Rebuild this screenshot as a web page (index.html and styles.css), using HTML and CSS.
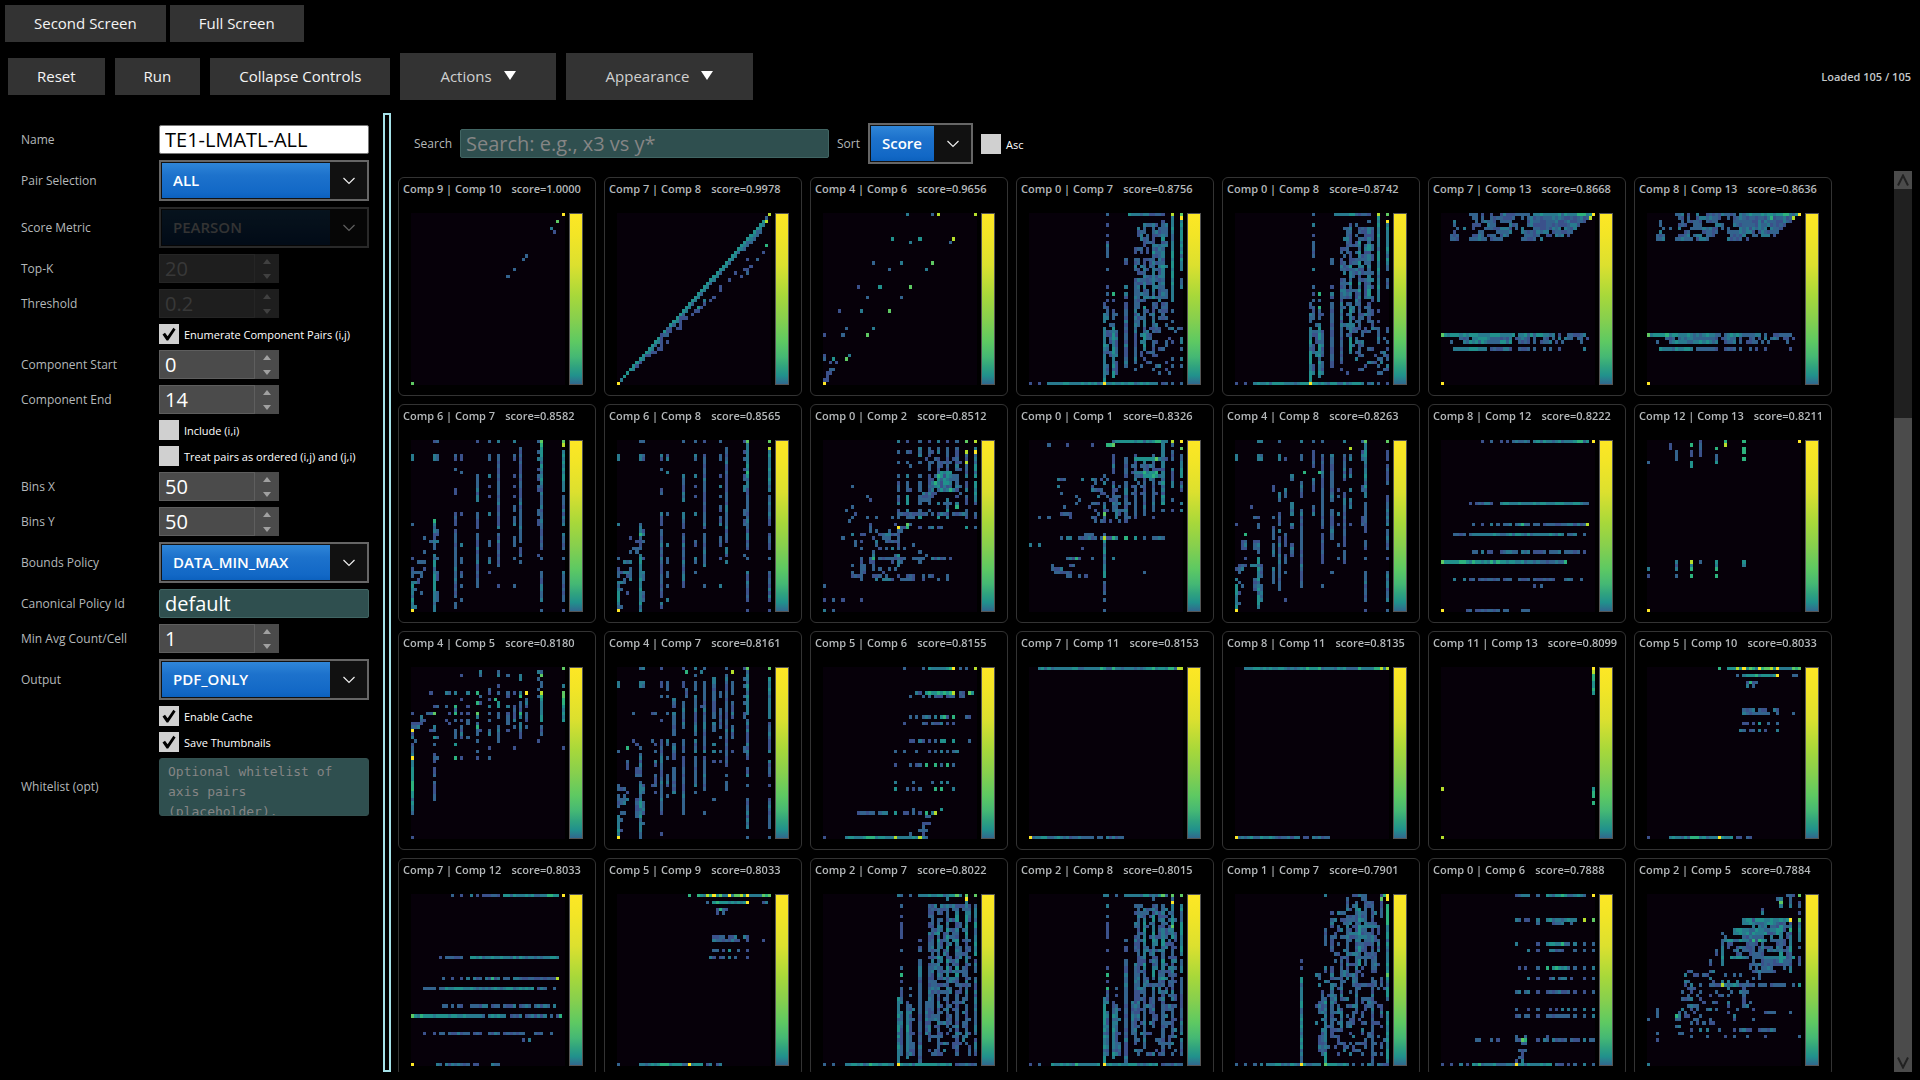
FILE: index.html
```html
<!DOCTYPE html>
<html lang="en">
<head>
<meta charset="utf-8">
<title>Pairwise Density Grid</title>
<link rel="stylesheet" href="styles.css">
</head>
<body>
<svg class="defs" aria-hidden="true">
  <symbol id="chevron" viewBox="0 0 12 8"><path d="M0.5 1 6 6.5 11.5 1" fill="none" stroke="currentColor" stroke-width="1.2"/></symbol>
  <symbol id="tick" viewBox="0 0 20 20"><path d="M3.5 10.5 6 8.8 8.6 12.2 14.4 3.8 16.6 5.4 9.2 16.6 7.6 16.6Z" fill="#000"/></symbol>
  <symbol id="up" viewBox="0 0 8 5"><path d="M4 0 8 5H0Z" fill="currentColor"/></symbol>
  <symbol id="down" viewBox="0 0 8 5"><path d="M0 0H8L4 5Z" fill="currentColor"/></symbol>
  <symbol id="menu" viewBox="0 0 12 9"><path d="M0 0H12L6 9Z" fill="#fff"/></symbol>
</svg>

<nav class="topbar">
  <button class="btn" type="button">Second Screen</button>
  <button class="btn" type="button">Full Screen</button>
</nav>

<header class="toolbar">
  <div class="toolbar-left">
    <button class="btn" type="button">Reset</button>
    <button class="btn" type="button">Run</button>
    <button class="btn" type="button">Collapse Controls</button>
  </div>
  <div class="toolbar-menus">
    <button class="btn menu-btn" type="button">Actions <svg class="menu-arrow"><use href="#menu"/></svg></button>
    <button class="btn menu-btn" type="button">Appearance <svg class="menu-arrow"><use href="#menu"/></svg></button>
  </div>
  <span class="status">Loaded 105 / 105</span>
</header>

<main class="workspace">
  <form class="controls">
    <label for="name">Name</label>
    <input class="text text-focus" id="name" type="text" value="TE1-LMATL-ALL">

    <label for="pair">Pair Selection</label>
    <div class="combo"><select id="pair"><option>ALL</option></select><svg class="chev"><use href="#chevron"/></svg></div>

    <label for="metric">Score Metric</label>
    <div class="combo is-disabled"><select id="metric" disabled><option>PEARSON</option></select><svg class="chev"><use href="#chevron"/></svg></div>

    <label for="topk">Top-K</label>
    <div class="spin is-disabled"><input id="topk" type="text" value="20" disabled><span class="steps"><svg><use href="#up"/></svg><svg><use href="#down"/></svg></span></div>

    <label for="threshold">Threshold</label>
    <div class="spin is-disabled"><input id="threshold" type="text" value="0.2" disabled><span class="steps"><svg><use href="#up"/></svg><svg><use href="#down"/></svg></span></div>

    <div class="check"><span class="box"><input id="enum" type="checkbox" checked><svg><use href="#tick"/></svg></span><label for="enum">Enumerate Component Pairs (i,j)</label></div>

    <label for="cstart">Component Start</label>
    <div class="spin"><input id="cstart" type="text" value="0"><span class="steps"><svg><use href="#up"/></svg><svg><use href="#down"/></svg></span></div>

    <label for="cend">Component End</label>
    <div class="spin"><input id="cend" type="text" value="14"><span class="steps"><svg><use href="#up"/></svg><svg><use href="#down"/></svg></span></div>

    <div class="check"><span class="box"><input id="incl" type="checkbox"><svg><use href="#tick"/></svg></span><label for="incl">Include (i,i)</label></div>
    <div class="check"><span class="box"><input id="ordered" type="checkbox"><svg><use href="#tick"/></svg></span><label for="ordered">Treat pairs as ordered (i,j) and (j,i)</label></div>

    <label for="binsx">Bins X</label>
    <div class="spin"><input id="binsx" type="text" value="50"><span class="steps"><svg><use href="#up"/></svg><svg><use href="#down"/></svg></span></div>

    <label for="binsy">Bins Y</label>
    <div class="spin"><input id="binsy" type="text" value="50"><span class="steps"><svg><use href="#up"/></svg><svg><use href="#down"/></svg></span></div>

    <label for="bounds">Bounds Policy</label>
    <div class="combo"><select id="bounds"><option>DATA_MIN_MAX</option></select><svg class="chev"><use href="#chevron"/></svg></div>

    <label for="policy">Canonical Policy Id</label>
    <input class="text" id="policy" type="text" value="default">

    <label for="minavg">Min Avg Count/Cell</label>
    <div class="spin"><input id="minavg" type="text" value="1"><span class="steps"><svg><use href="#up"/></svg><svg><use href="#down"/></svg></span></div>

    <label for="output">Output</label>
    <div class="combo"><select id="output"><option>PDF_ONLY</option></select><svg class="chev"><use href="#chevron"/></svg></div>

    <div class="check"><span class="box"><input id="cache" type="checkbox" checked><svg><use href="#tick"/></svg></span><label for="cache">Enable Cache</label></div>
    <div class="check"><span class="box"><input id="thumbs" type="checkbox" checked><svg><use href="#tick"/></svg></span><label for="thumbs">Save Thumbnails</label></div>

    <label for="whitelist">Whitelist (opt)</label>
    <textarea class="area" id="whitelist" placeholder="Optional whitelist of axis pairs (placeholder)."></textarea>
  </form>

  <div class="divider" role="separator"></div>

  <section class="results">
    <div class="filters">
      <label for="search">Search</label>
      <input class="text search" id="search" type="text" placeholder="Search: e.g., x3 vs y*">
      <label for="sort">Sort</label>
      <div class="combo combo-small"><select id="sort"><option>Score</option></select><svg class="chev"><use href="#chevron"/></svg></div>
      <div class="check"><span class="box"><input id="asc" type="checkbox"><svg><use href="#tick"/></svg></span><label for="asc">Asc</label></div>
    </div>
    <div class="scroller">
      <div class="grid" id="grid"></div>
      <div class="scrollbar">
        <button class="sb-btn" type="button" aria-label="Scroll up"><svg viewBox="0 0 12 12"><path d="M1 11.5 6 1.5 11 11.5" fill="none" stroke="#222" stroke-width="2"/></svg></button>
        <div class="sb-track"></div>
        <div class="sb-thumb"></div>
        <button class="sb-btn" type="button" aria-label="Scroll down"><svg viewBox="0 0 12 12"><path d="M1 0.5 6 10.5 11 0.5" fill="none" stroke="#222" stroke-width="2"/></svg></button>
      </div>
    </div>
  </section>
</main>
<script src="script.js"></script>
</body>
</html>
```
FILE: styles.css
```css
* { box-sizing: border-box; }

body {
  margin: 0;
  height: 100vh;
  display: flex;
  flex-direction: column;
  background: #000;
  color: #b4b8ba;
  font: 12px/16px "Open Sans", "Noto Sans", sans-serif;
  overflow: hidden;
}

button, input, select, textarea { font: inherit; color: inherit; margin: 0; border: 0; border-radius: 0; }
.defs { display: none; }

.btn {
  height: 37px;
  padding: 0 29px 2px;
  background: #333;
  color: #f4f4f4;
  font-size: 15px;
  white-space: nowrap;
}

.topbar { display: flex; gap: 4px; padding: 5px 5px 0; }

.toolbar { display: flex; align-items: center; padding: 11px 9px 0 8px; }
.toolbar-left { display: flex; gap: 10px; }
.toolbar-menus { display: flex; gap: 10px; margin-left: 10px; }
.menu-btn {
  display: flex;
  align-items: center;
  gap: 12px;
  height: 47px;
  padding: 0 40px 2px;
  color: #d0d0d0;
  font-weight: 500;
}
.menu-arrow { width: 12px; height: 9px; }
.status { margin-left: auto; color: #c4c8ca; font-size: 11px; font-weight: 600; }

.workspace { flex: 1; min-height: 0; display: flex; padding: 13px 8px 8px; }

.controls {
  width: 375px;
  flex: none;
  display: grid;
  grid-template-columns: 138px 210px;
  align-content: start;
  align-items: center;
  gap: 6px 0;
  padding: 12px 0 0 13px;
}
.controls > label { font-weight: 500; }

.text {
  width: 100%;
  height: 29px;
  padding: 0 5px;
  border: 1px solid #416563;
  border-radius: 2px;
  background: #2f4f4f;
  color: #fff;
  font-size: 20px;
}
.text-focus { background: #fff; border-color: #777; color: #000; }
.text::placeholder, .area::placeholder { color: #858585; opacity: 1; }

.combo {
  display: grid;
  grid-template-columns: 1fr 38px;
  align-items: center;
  height: 41px;
  border: 2px solid #666;
}
.combo select {
  grid-area: 1 / 1 / 2 / 3;
  height: 37px;
  appearance: none;
  padding: 0 11px 2px;
  border: 1px solid #111;
  border-right-width: 37px;
  background: linear-gradient(#2f86d8, #1d72cc 35%, #1268c6 85%, #0c61be);
  color: #fff;
  font-size: 15px;
  font-weight: 600;
  opacity: 1;
}
.chev { grid-area: 1 / 2; width: 12px; height: 8px; margin-left: 14px; color: #eee; pointer-events: none; z-index: 1; }

.spin {
  display: grid;
  grid-template-columns: 96px 24px;
  width: 120px;
  height: 29px;
  background: #4b4b4b;
}
.spin input {
  width: 96px;
  padding: 0 5px;
  border: 1px solid #5e5e5e;
  background: #4b4b4b;
  color: #fff;
  font-size: 20px;
}
.steps { display: flex; flex-direction: column; align-items: center; justify-content: space-between; padding: 5px 0 4px; color: #a0a0a0; }
.steps svg { width: 8px; height: 5px; }
.is-disabled { opacity: 0.4; }
.spin.is-disabled input { color: #8c8c8c; }
.combo.is-disabled select { background: linear-gradient(#12304a, #051c3a); color: #808080; }

.check { grid-column: 2; display: flex; align-items: center; gap: 5px; height: 20px; color: #fff; font-size: 11px; white-space: nowrap; }
.check label { padding-top: 2px; }
.box { display: grid; width: 20px; height: 20px; }
.box input { grid-area: 1 / 1; appearance: none; width: 20px; height: 20px; background: #d0d0d0; }
.box svg { grid-area: 1 / 1; width: 20px; height: 20px; visibility: hidden; pointer-events: none; z-index: 1; }
.box input:checked + svg { visibility: visible; }

.area {
  width: 100%;
  height: 58px;
  padding: 3px 8px 0;
  border: 1px solid #34504f;
  border-radius: 3px;
  background: #2f4f4f;
  font: 13px/20px "DejaVu Sans Mono", "Liberation Mono", monospace;
  resize: none;
  overflow: hidden;
}

.divider { width: 8px; flex: none; border: 2px solid #a5e1e8; }

.results { flex: 1; min-width: 0; display: flex; flex-direction: column; margin-left: 7px; }
.filters { display: flex; align-items: center; gap: 8px; height: 61px; padding: 0 0 0 16px; }
.filters .search { width: 369px; }
.combo-small { width: 105px; }
.scroller { flex: 1; min-height: 0; display: flex; margin-top: -3px; }

.grid {
  flex: 1;
  display: grid;
  grid-template-columns: repeat(auto-fill, 198px);
  align-content: start;
  gap: 8px;
  padding-top: 6px;
  overflow: hidden;
}
.card { height: 219px; border: 1px solid #333; border-radius: 6px; padding: 3px 4px 0; }
.card-title { display: flex; gap: 10px; height: 16px; margin: 0; font-size: 11px; font-weight: 600; white-space: nowrap; }
.plot { display: flex; gap: 4px; margin: 16px 0 0 8px; }
.heat { width: 154px; height: 172px; background: #060009; }
.ramp {
  width: 14px;
  height: 172px;
  border: 1px solid #555;
  background: linear-gradient(#fde725, #f3e526 12%, #dce02f 30%, #a8d83a 48%, #86cf4e 62%, #5ec962 75%, #45b874 84%, #2fa27f 90%, #21918c 95%, #31688e);
}

.scrollbar { width: 18px; flex: none; display: flex; flex-direction: column; background: #202020; }
.sb-btn { display: grid; place-items: center; width: 18px; height: 18px; padding: 0; background: #4b4b4b; }
.sb-btn svg { width: 12px; height: 12px; }
.sb-track { height: 229px; flex: none; }
.sb-thumb { flex: 1; background: #4b4b4b; }
```
FILE: script.js
```js
// Each plot is a 50 x 50 histogram. Cells are listed as runs:
//   v<x>:<rows>   a column      h<y>:<columns>   a row
//   r<x0>-<x1>,<y0>-<y1>,<percent>   a scattered block
// An optional /<level> fixes the colour; s, n and t are mixed low levels.
const LEVELS = { a: '#3b518b', b: '#33638d', c: '#287a8e', d: '#21918c', e: '#2db27d', f: '#5ec962', g: '#b5de2b', h: '#fde725' };
const MIX = { s: 'aaab', n: 'aabbbc', t: 'bcccdd', u: 'cddde' };

const comp78 = 'v0:49/h v1:48/c v2:47/d v3:46/d v4:45/d h13:45,42/a h11:47/a h9:48/e h15:43/a h16:41-42/a h17:42,38/a h18:40/a h19:36/a v33:21-22/a h24:31/a h25:28,30/a h26:28/a h27:27/a,26/d h28:25-26/a h29:24/a h30:20-22/a v20:31-32/a h33:19-20/a v16:33-35,37/a v14:35-39/a v17:33-34/a h40:11-12/a v13:39/a h41:9-10/a h43:7/a h44:6/a v21:29/b';
const dense07 = 'h0:25,32-43/n,32-38/t v25:3,6,8-12,16,21,23,25,27-30,34-35,38-40,44-46 v24:26-27,29-31,33-48/t v27:23/e,25,28-30,32-47/t v28:29,34-41,43-46 v26:32,34-37,40-41 v31:13-14,21,23-24,26-44/n v34:10-11,13-16,19-30/n,32-43/n,45 v35:10,14,16,19-24 v37:3-5,7-9,14,15-24/t,27-39/t v40:5,8-24/t,26-33,37-41 v43:2,4-24/t,26-30 v42:4-6,10-14,19-24 r35-44,3-23,45 r34-44,24-34,38 r36-49,33-46,18 v46:1-25/t,0/g,28,31,33,37,42,44 v49:0/f,2-16/t,19-21,33,37,42,44 h49:0,3,6-41/t,43-44,46,49,24/h';
const band13 = 'h0:9-11,13,16,19-28,30-48/t h1:10-11,13,16-23,26,28-47 h2:4,11,13-17,19-22,28-46 h3:4,10-12,15-17,22-24,28-44 h4:5,7,10,14-22,24,26,30-38,40-43 h5:4,12-13,18-22,26-34,36-42 h6:3-5,10-13,15-17,19-21,27-31,34-35,37-39,41 h7:3-5,9-14,16-19,26-30,32 h35:0/f,1-8/u,9-23/t,25-36/t,38,41-46 h36:6-8,10-14/t,15-22,24-28,30,33-34,36,38,40-42,44-45,47 h37:3,7-22/t,25-28,30,32-35,37,39,45 h39:4-14/t,16-22,25-28,30,33,35,38,46 h49:0/h';
const stripes6 = 'v0:4-5/c,24,34,37-39,41-48/t,49/h v1:38,41,43,48 v2:35,38,40-41 v3:35,38-39,44 v4:28,32,35,37 v6:29 v7:0,4-5/c,24-31,33-48/t,49/c v8:0,4-5,26-27,29,34,38-40,44-46 v14:4-5,8,14-15,21-24,26-41/n,42-45,47-48 v16:4-5,9,21,30,34-35,38-39,42,46 v21:0,10-17,21-25,27-42/n v25:0,4-5,10,13,16,21,29-30,34-35,38 v28:0,4-25/n,27-36/n,42 v33:0,4-5,10,13,16,19-20,22-24,28-30,34,42 v35:2-29/n,31-33,35 v41:0,3,5,8,10-11,13-14,20-21,23-24,33 v42:0/f,1-13/t,14-31,34,38-46,49 v49:0/f,3-14/t,16-24/n,27-31,34,38-46,49';
const top11 = 'h0:3-47/t,27/e,23/e,40/e,45-46/e h49:0/h,1-12/t,13-20/n,22-23,25-30';
const comp5 = 'h0:23/e,26-48/u,29/g,31/h,33/f,36/h,38-39/f,40/g,42/h,43-46/c,47/f,49/f h2:29,31-41/u,42/h,47-48 h4:32,33/e,34-35 h5:32,34 h12:31-34,36-38,41-42 h13:31-39,42,47 h16:31,32,34,36/d,39,42 h18:30-31,33-34,36/c,38,42 h49:0,7-27/t,14-16/e,23/h,29-30,32-33';
const rows12 = 'h0:13,16,19,21,23-28,30-47/t,44-45/e,49/h h18:9,11-16,19-47/t h24:10,13,16,18,20-22,24-25,26/e,27-28,30-31,33-46,47/g h27:4-7,9-39/t,41-43,46 h32:10-11,13,15-16,19-24,26-28,30-33,35-38,40-44,46 h40:4,7,9-10,12-18,20-22,25-28,30-36,40-42,45 h49:0/h,8-9,11-18,20-21,26-28';
const dense2 = 'h0:24-25,28,31-44/t,43/f,46/f v25:3,6,8-12/a,16,21,23/e,25,27-31,34-46 v24:30-48/t v27:31-34,35-47/t v28:27,29,32-46 v29:33,36,40,43-46 v31:13,15-16,19-48/n v33:31-40 v34:3,5,8,12-16,20-42/n v35:3-16/n,18-36 v37:4,7-24/t,26-44 v40:1,3-24/t,26-38 v43:3-26/t,28-46 r34-47,3-26,42 r34-47,26-46,34 v46:0/f,1/h,2-12/t,14-30,32-40 v49:0/f,3-17/t,19-22,24-40,42-46 h49:0,3,7-22/t,24/h,15/e,25-41/t,43-49';
const rows0 = '24-25,27-28,31,34-41,43,46,49';

const PLOTS = [
  ['Comp 9 | Comp 10', '1.0000', 'h0:49/h h2:47/f h4:45/c h5:46/a h12:37/b h13:36/b h16:33/b h18:31/b h49:0/f'],
  ['Comp 7 | Comp 8', '0.9978', comp78, 'diag'],
  ['Comp 4 | Comp 6', '0.9656', 'h0:27/c,35/b,37/g,49/g h7:22/d,31/d,42/g h8:28/c,41/b h14:16/b,25/c,35/f h16:21/b,33/c h21:11/a,18/d,28/f h24:14/b,25/b h28:5/a,12/c,21/f h33:7/b,16/c h35:0/a,6/b,14/f h41:0/a,8/c h42:0/b,3/d,7/f h43:2/a,4/a h45:2-3/b h46:1-2/a h47:1/a h48:0-1/a h49:0/h'],
  ['Comp 0 | Comp 7', '0.8756', dense07 + ' v49:1/h'],
  ['Comp 0 | Comp 8', '0.8742', dense07 + ' v49:2/h v27:27/e,24/x'],
  ['Comp 7 | Comp 13', '0.8668', band13 + ' h0:44-46/e,49/h h1:48/g'],
  ['Comp 8 | Comp 13', '0.8636', band13 + ' h0:44-45/e,49/h h1:40/e,47/g'],
  ['Comp 6 | Comp 7', '0.8582', stripes6 + ' v7:23/e v42:1/e v49:1/g'],
  ['Comp 6 | Comp 8', '0.8565', stripes6 + ' v7:27/e v42:9/e v49:2/g v4:37-40 v6:31-32 v5:31'],
  ['Comp 0 | Comp 2', '0.8512', 'v24:0,3,6,10,12-14,16-18,20-22,26-31,33-36/t v27:0,3,6,10,12-14,16-18/u,20-22,24/f v28:3,7,14,24 v31:0,2-4,6,10,12-14,16-18,20-22/t v34:0,2-4,6-7,10-15,18,20/t v35:3,6,11-14 v37:0,2-3,5-6,8-14,18,21-22/t v40:0,2-6,8-14,17,19-22/t v43:0,2-8,10-14,16,18-19/u v46:0/f,3/g,4-5,6/g,7-10,12-14,16-18,20-22,25/t v49:0/g,2/c,3/h,4-10/t,12-18/t,21-22,25 h9:38-41/u h10:37-41/u h11:37-40/u h12:36-41/u h13:36-39/u h14:38-42/u r33-44,5-14,40 h15:32-36,44 h16:31-35 h17:31-34 h18:39-41,49 h21:25-33,35,37-40,42-45 h22:22,24,27-29 h25:24/h,25-26,27/e,31,34-35,37-38 h26:21,25 h27:19-22 r9-24,19-39,10 r14-24,24-34,22 r24-34,27-40,8 h13:9 h16:14 h17:15 h20:7 h23:8 h28:6 v10:29-30 v12:31,34-40,46 v13:36-38 v16:34/e,35-36 h34:18-24,26,29-32,35-39,41 h39:9,11,17-18,20,24,28-29,32,34-35,40 h40:12,17,19-22,25-29,32,37,40 v0:42,46,49/c v3:46,49 v6:46'],
  ['Comp 0 | Comp 1', '0.8326', 'h0:27-44/t,41-42/e,46/g,49/h h1:6,12,20,25-26/e,27/f,46 v49:0/h,2/f,4-10/t,12-14,18,20 v46:3-5,8-13,17,20 v43:1-18/t,20 v40:4-20/n,22 v37:5-21/n v34:4-11,13-22/n v31:5-10,12-22/n v27:4-9,12-20 v28:16-22 v24:19-20,21/f,22-23 r20-32,11-23,25 r33-43,7-15,40 h5:34-40/d,41/f,42-44 h9:35-41/u h10:37-41/u r9-24,10-22,12 h28:10,12-13/c,16-21,23,24/g,25-26,27/e,28,31/e,34/d,37,40-43 h27:18-20,24 v24:29-39/t,41-44,46,49 h30:0/c,3/c h22:3,6 h34:12-14,15/e,16,20,27 h37:7-10 h38:8-13 h39:12-13,16,18 h36:7,13-14 h31:17 v37:38'],
  ['Comp 4 | Comp 8', '0.8263', 'v0:4-5/c,24,37,40,42-48/t,49/h v1:36-38,41,44,47 v2:29-31,36-37,42 v3:27/e,29-31,34,36 v5:19,36 v6:22,29-31,36,40-43 v7:0,4-5/c,22,24-25,29-32,34-48/t v8:0,4-5,36-39,42-46 v12:13-14,22,25-28,30-33,37-41 v14:0,4-5/c,15-17,21-24,26,28-43/n v16:5,14-16,27-30,33-35,38,46 v18:10-11,18-21,24-25,30-33 v21:0,4-5,12-16,20-42/n v22:9/e v25:0,3-7,11-14,19-21 v27:9/e v28:0,4-25/n,27-35,42 v31:4-17,20-28,38 v33:14,16,21,24,30,34 v35:0,4-11,15-30/n,32-35 v37:2/g,4-5,8-10,14,17-19,24 v41:0,3-5,13-14,22-24 v42:0/f,1-16/t,18-26,29-31,34,38-46,49 v49:0/f,3-5,7-12,16-24,26-31,34,38-46,49'],
  ['Comp 8 | Comp 12', '0.8222', rows12 + ' h35:0/f,1-20/u,21-29/t,30-39,40/e h42:30,32'],
  ['Comp 12 | Comp 13', '0.8211', 'v0:6/b,37/c,39/a,49/h v7:1-2/a v9:3-5/b,35/c,36/a,37/c,39/b v14:1/e,3-4/a,6-7/d,35/g,36/c,37/e,39/e v17:0/a,1-2/b,3-4/a,35/b v22:2/e,4-5/b,6/d,35/d,36/c,37/e,39/e v25:0/e,1/g v31:0/e,2-3/e,5/e,35/d,36/c v49:0/h'],
  ['Comp 4 | Comp 5', '0.8180', 'v0:13,16-17,18/h,19-20,22-25,26/h,27-42/t,33-35/e,49 v1:16-17,21 v2:16-17 v3:14-16 v5:13 v4:15 v6:7,13,18 v7:11,13/f,17,18,20/d,22,25-27/n,29-31,33-38 v8:11,20,26 v11:7,11,15 v12:7,13,16 v14:7,11/e,12,13/e,15,18-19,20,22/d,26/e v16:2,9,13,15,17-20,26 v18:7,11,13,15-16,20 v21:7/e,10/e,13/f,14,16,17/e,18-19,21,24,26 v22:1-2,8,10,18 v25:6-7,9,11,13,15,18-19,23,26 v27:9/e v28:1-2,5,7,10-11/d,13-14,17-21 v31:2,7-8,11,13-16,18 v33:7,11-15,17,23 v35:2-3,7,8/e,10-12,13/e,14,16-20 v37:7/h,9-10,11,13-15,17 v41:1,3,6,8,21 v42:1,2/f,4-5,7/g,8/e,9-15/t,17-19 v49:0/f,5,7-8/f,9-10/e,11-15/t,23'],
  ['Comp 4 | Comp 7', '0.8161', 'v0:4-5/c,24,34-35,37-40,43-48/t,49/h v1:35,38-39,42,44,47 v2:35,37-39,42 v3:23/e,27-29,36,38 v5:13,21 v6:22,29-31,38-43 v7:0,4-5/c,23,25-31,33-49/t v8:0,4-5,34-36,39-42,45 v11:13,21,34 v12:13,22,24,27-28,31-34,36 v14:0,4-5,8,15,21-42/n,48 v16:4-6,8,13,21-22,26,31-34,37 v18:9-11,13-19,22-26,29-36 v21:0,4-5,10-17/n,21-24,26-42/n v22:1/e,6-8 v25:0,2,4-6,8-19,21-24,26-34,36 v27:1/c,11 v28:0,4-24/n,26-35,42 v31:3-14,16-18,22,24,27,38 v33:7-8,12-17,20,24,27 v35:0,2-18/n,19-28,31,33-35 v37:1/g,4-7,10-14,17-20,24 v41:0,3,5,8,10,13-14,23-24 v42:0/f,1-13/t,15-26,29-31,34,38-46,49 v49:0/f,3-14/t,16-24,27-31,34,38-46,49'],
  ['Comp 5 | Comp 6', '0.8155', 'h0:26,32,34-40/t,41/e,42/h,44,46,49/g h7:30-31,33-41/u,42/g,44-45,47/f,48/d h8:28,32,34,36-38,40-42,44-45 h14:28,30,32-34,36/c,38/d,39/e,40,42/e,46-47 h16:26,32-33,35-38,40,42 h21:28-29,31-32,34,36,38-39/d,42/d,47 h24:23,26,30,34,36,38,40,42-43 h28:23,28,30-31,33/e,36/e,38,40/e,42 h33:23,29,35,38,40 h35:23/d,27,29,31,36/e,38/e,42/c h41:29,38/d h42:11-16,18-20,23/d,26-27,29,31,33/e,36/g,35 h43:33-34 h45:32-34 h46:32 h47:31-33 h48:28,32 h49:0,7-22/t,14-16/e,23/g,24-30/t,31/g,32-33'],
  ['Comp 7 | Comp 11', '0.8153', top11 + ' h0:48-49/g'],
  ['Comp 8 | Comp 11', '0.8135', top11 + ' h0:47/g,48/c,49/g'],
  ['Comp 11 | Comp 13', '0.8099', 'v49:0/h,1/g,2-3/e,4-5/d,6/e,7/d,35/d,36-37/e,39/e v0:35/g,49/g'],
  ['Comp 5 | Comp 10', '0.8033', comp5],
  ['Comp 7 | Comp 12', '0.8033', rows12 + ' h35:0/f,1-10/u,11-23/t,25-30/t,32-35,37-43,45,47,48/e h42:36,38'],
  ['Comp 5 | Comp 9', '0.8033', comp5],
  ['Comp 2 | Comp 7', '0.8022', dense2],
  ['Comp 2 | Comp 8', '0.8015', dense2 + ' v46:1/b,2/h,9/f v25:27/e'],
  ['Comp 1 | Comp 7', '0.7901', 'v21:19,21,24-48/t v29:10-14,21-22,30-49/t v31:7-8,12-14,22-24,26-40 v36:1-4,6-14,16-24 v42:0-20 v44:2-22 v28:28-34,39-46 v27:23-24,31-33,41-44 v34:18-30,33-37/t v26:23,32,37 r31-47,5-26,34 r36-44,1-18,30 r27-48,25-46,22 v39:2-34/n v40:4-20/t v44:24-48 v47:0-6 h0:29,38-42,48/e v47:1/f v49:0-1/h,3-8/e,9-22/t,23/f,24-30/t,34-48/t h49:0,3,6,8,10-27/t,21/h,29/f,30-36/t,38,41,43-44,46-49'],
  ['Comp 0 | Comp 6', '0.7888', 'h0:24-28,31,34-45/t,39/e,46,49/h h7:24-25,27-28,31,34-43/t,46/g,49/f h8:31,36-39,42 h14:24,31,34-41/t,39/e,43,46,49 h16:28,31,35-39,43,46,49 h21:25,27,31,34/e,36-41/t,37/e,43,46,49 h24:28,31,35-36,38-40,42,46,49 h28:' + rows0 + '/t h33:24,28,31,35,37,39,41,43,46,49 h35:' + rows0 + '/t h41:24,27,34 h42:11-12,16,18,24,26/f,25,27/e,31,33-34,36-40,42-44,46,48-49 h43:26-27 h45:25-27 h46:26 h47:25-26 h48:24,26 h49:0,3,6,8,10-35/t,12/e,24/h,37-39,41,43,46,49'],
  ['Comp 2 | Comp 5', '0.7884', 'v49:0/f,2-3,5,7/f,8-13/t,15,18-20,26 v46:0-3,7/h,8-10/e,11-22/t v43:1/c,2/f,3,8-20/t h0:45-47 h1:42-43 v37:4-5,8-22/n h7:31-45/t h8:31-41/t v34:7-20 h10:28-43/t h11:28-42/t h13:24-38/u,40-44 h18:24/g,27-31/t,36-47/t h20:33-45 v24:11,13-20/t r33-46,8-21,42 r24-33,12-18,38 v22:16-17 v20:19-20 h21:37-40 h22:34-41 h23:36 h24:36 h26:20-22,23,24/g,25,26-30/t,32-34,36-38,40-44,47,49/t v31:26-32 r11-22,22-37,22 r22-34,23-36,20 h34:38-41,46 h35:9/e,10/c h36:0,9-10,15,34 r8-14,32-40,18 h39:14,17,19,23,28,30-33,36-38,39-41 h41:14,19,25,28,32,38,49 v3:33-35,40,42 h49:0/c']
];

function makeRandom(seed) {
  let s = seed * 7919 + 17;
  return () => {
    s = (s * 1664525 + 1013904223) % 4294967296;
    return s / 4294967296;
  };
}

function readRange(text) {
  const [from, to] = text.split('-').map(Number);
  return [from, to === undefined ? from : to];
}

function drawHeat(canvas, runs, diagonal, seed) {
  const ctx = canvas.getContext('2d');
  const random = makeRandom(seed);
  const w = canvas.width / 50;
  const h = canvas.height / 50;

  const cell = (x, y, level) => {
    const mix = MIX[level];
    const key = mix ? mix[Math.floor(random() * mix.length)] : level;
    const left = Math.round(x * w);
    const top = Math.round(y * h);
    ctx.fillStyle = LEVELS[key] || '#060009';
    ctx.fillRect(left, top, Math.round((x + 1) * w) - left, Math.round((y + 1) * h) - top);
  };

  if (diagonal) {
    for (let x = 2; x < 49; x++) {
      cell(x, 49 - x, 'd');
      if (x > 4) cell(x, 50 - x, x % 3 ? 'c' : 'b');
      if (x > 40 && x < 47) cell(x, 51 - x, 'b');
    }
    cell(48, 1, 'b');
    cell(48, 2, 'g');
    cell(49, 0, 'g');
  }

  runs.split(' ').forEach((run) => {
    const kind = run[0];
    if (kind === 'r') {
      const [xs, ys, pct] = run.slice(1).split(',');
      const [x0, x1] = readRange(xs);
      const [y0, y1] = readRange(ys);
      for (let x = x0; x <= x1; x++) {
        for (let y = y0; y <= y1; y++) {
          if (random() * 100 < Number(pct)) cell(x, y, 'n');
        }
      }
      return;
    }
    const [at, list] = run.slice(1).split(':');
    list.split(',').forEach((part) => {
      const [range, level] = part.split('/');
      const [from, to] = readRange(range);
      for (let i = from; i <= to; i++) {
        if (kind === 'v') cell(Number(at), i, level || 'n');
        else cell(i, Number(at), level || 'n');
      }
    });
  });
}

const grid = document.getElementById('grid');
PLOTS.forEach(([pair, score, runs, diagonal], index) => {
  const card = document.createElement('article');
  card.className = 'card';
  card.innerHTML = `<h2 class="card-title"><span>${pair}</span><span>score=${score}</span></h2>
    <div class="plot"><canvas class="heat" width="154" height="172"></canvas><div class="ramp"></div></div>`;
  grid.appendChild(card);
  drawHeat(card.querySelector('canvas'), runs, diagonal, index + 1);
});
```
